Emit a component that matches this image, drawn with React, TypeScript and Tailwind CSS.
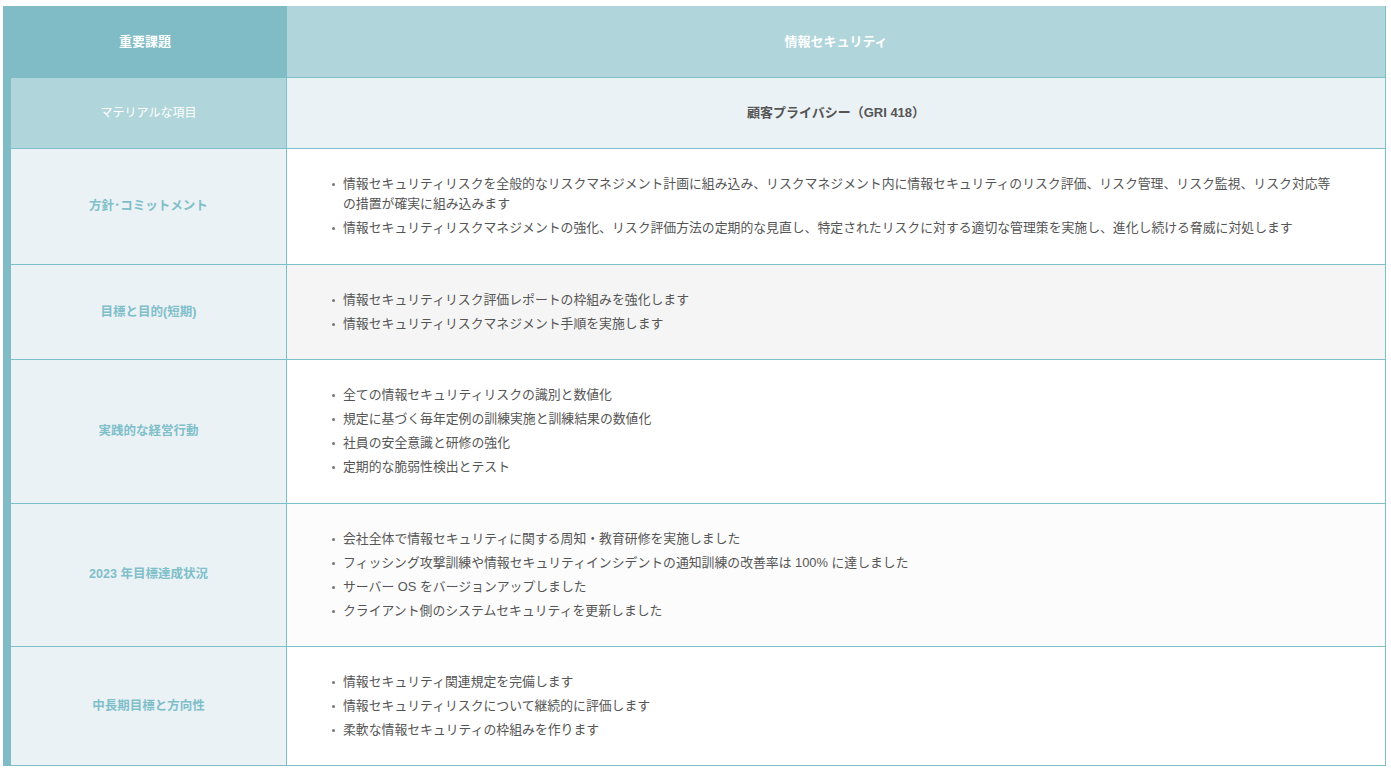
const font = "font-['Liberation_Sans','Noto_Sans_CJK_JP',sans-serif]";

const rows: { label: string; bg: string; items: string[] }[] = [
  {
    label: "方針･コミットメント",
    bg: "bg-white",
    items: [
      "情報セキュリティリスクを全般的なリスクマネジメント計画に組み込み、リスクマネジメント内に情報セキュリティのリスク評価、リスク管理、リスク監視、リスク対応等の措置が確実に組み込みます",
      "情報セキュリティリスクマネジメントの強化、リスク評価方法の定期的な見直し、特定されたリスクに対する適切な管理策を実施し、進化し続ける脅威に対処します",
    ],
  },
  {
    label: "目標と目的(短期)",
    bg: "bg-[#f5f5f5]",
    items: [
      "情報セキュリティリスク評価レポートの枠組みを強化します",
      "情報セキュリティリスクマネジメント手順を実施します",
    ],
  },
  {
    label: "実践的な経営行動",
    bg: "bg-white",
    items: [
      "全ての情報セキュリティリスクの識別と数値化",
      "規定に基づく毎年定例の訓練実施と訓練結果の数値化",
      "社員の安全意識と研修の強化",
      "定期的な脆弱性検出とテスト",
    ],
  },
  {
    label: "2023 年目標達成状況",
    bg: "bg-[#fcfcfc]",
    items: [
      "会社全体で情報セキュリティに関する周知・教育研修を実施しました",
      "フィッシング攻撃訓練や情報セキュリティインシデントの通知訓練の改善率は 100% に達しました",
      "サーバー OS をバージョンアップしました",
      "クライアント側のシステムセキュリティを更新しました",
    ],
  },
  {
    label: "中長期目標と方向性",
    bg: "bg-white",
    items: [
      "情報セキュリティ関連規定を完備します",
      "情報セキュリティリスクについて継続的に評価します",
      "柔軟な情報セキュリティの枠組みを作ります",
    ],
  },
];

export default function App() {
  return (
    <div className={`min-h-screen bg-white pt-[6px] pl-[3px] ${font}`}>
      <div className="w-[1383px] border-r border-[#7dc0ca]">
        {/* header */}
        <div className="flex h-[72px] border-b border-[#7dc0ca]">
          <div className="w-[284px] bg-[#80bcc6] flex items-center justify-center text-[13px] font-bold text-white">
            重要課題
          </div>
          <div className="flex-1 bg-[#b0d5da] flex items-center justify-center text-[13px] font-bold text-white">
            情報セキュリティ
          </div>
        </div>

        <div className="border-l-8 border-[#80bcc6]">
          <div className="flex h-[71px] border-b border-[#7dc0ca]">
            <div className="w-[276px] bg-[#b0d5da] border-r border-[#7dc0ca] flex items-center justify-center text-[12px] text-white">
              マテリアルな項目
            </div>
            <div className="flex-1 bg-[#eaf2f5] flex items-center justify-center text-[13px] font-bold text-[#555]">
              顧客プライバシー（GRI 418）
            </div>
          </div>

          {rows.map((r) => (
            <div key={r.label} className="flex border-b border-[#7dc0ca]">
              <div className="w-[276px] shrink-0 bg-[#eaf2f5] border-r border-[#7dc0ca] flex items-center justify-center text-[12.5px] font-bold text-[#80bfca]">
                {r.label}
              </div>
              <ul className={`flex-1 ${r.bg} pl-[45px] pr-[48px] py-[25px] flex flex-col gap-[3.6px] text-[12.85px] leading-[20.4px] text-[#555]`}>
                {r.items.map((t) => (
                  <li key={t} className="flex items-start">
                    <span className="mt-[9px] mr-[8px] w-[3px] h-[3px] shrink-0 rounded-full bg-[#777]" />
                    <span>{t}</span>
                  </li>
                ))}
              </ul>
            </div>
          ))}
        </div>
      </div>
    </div>
  );
}
